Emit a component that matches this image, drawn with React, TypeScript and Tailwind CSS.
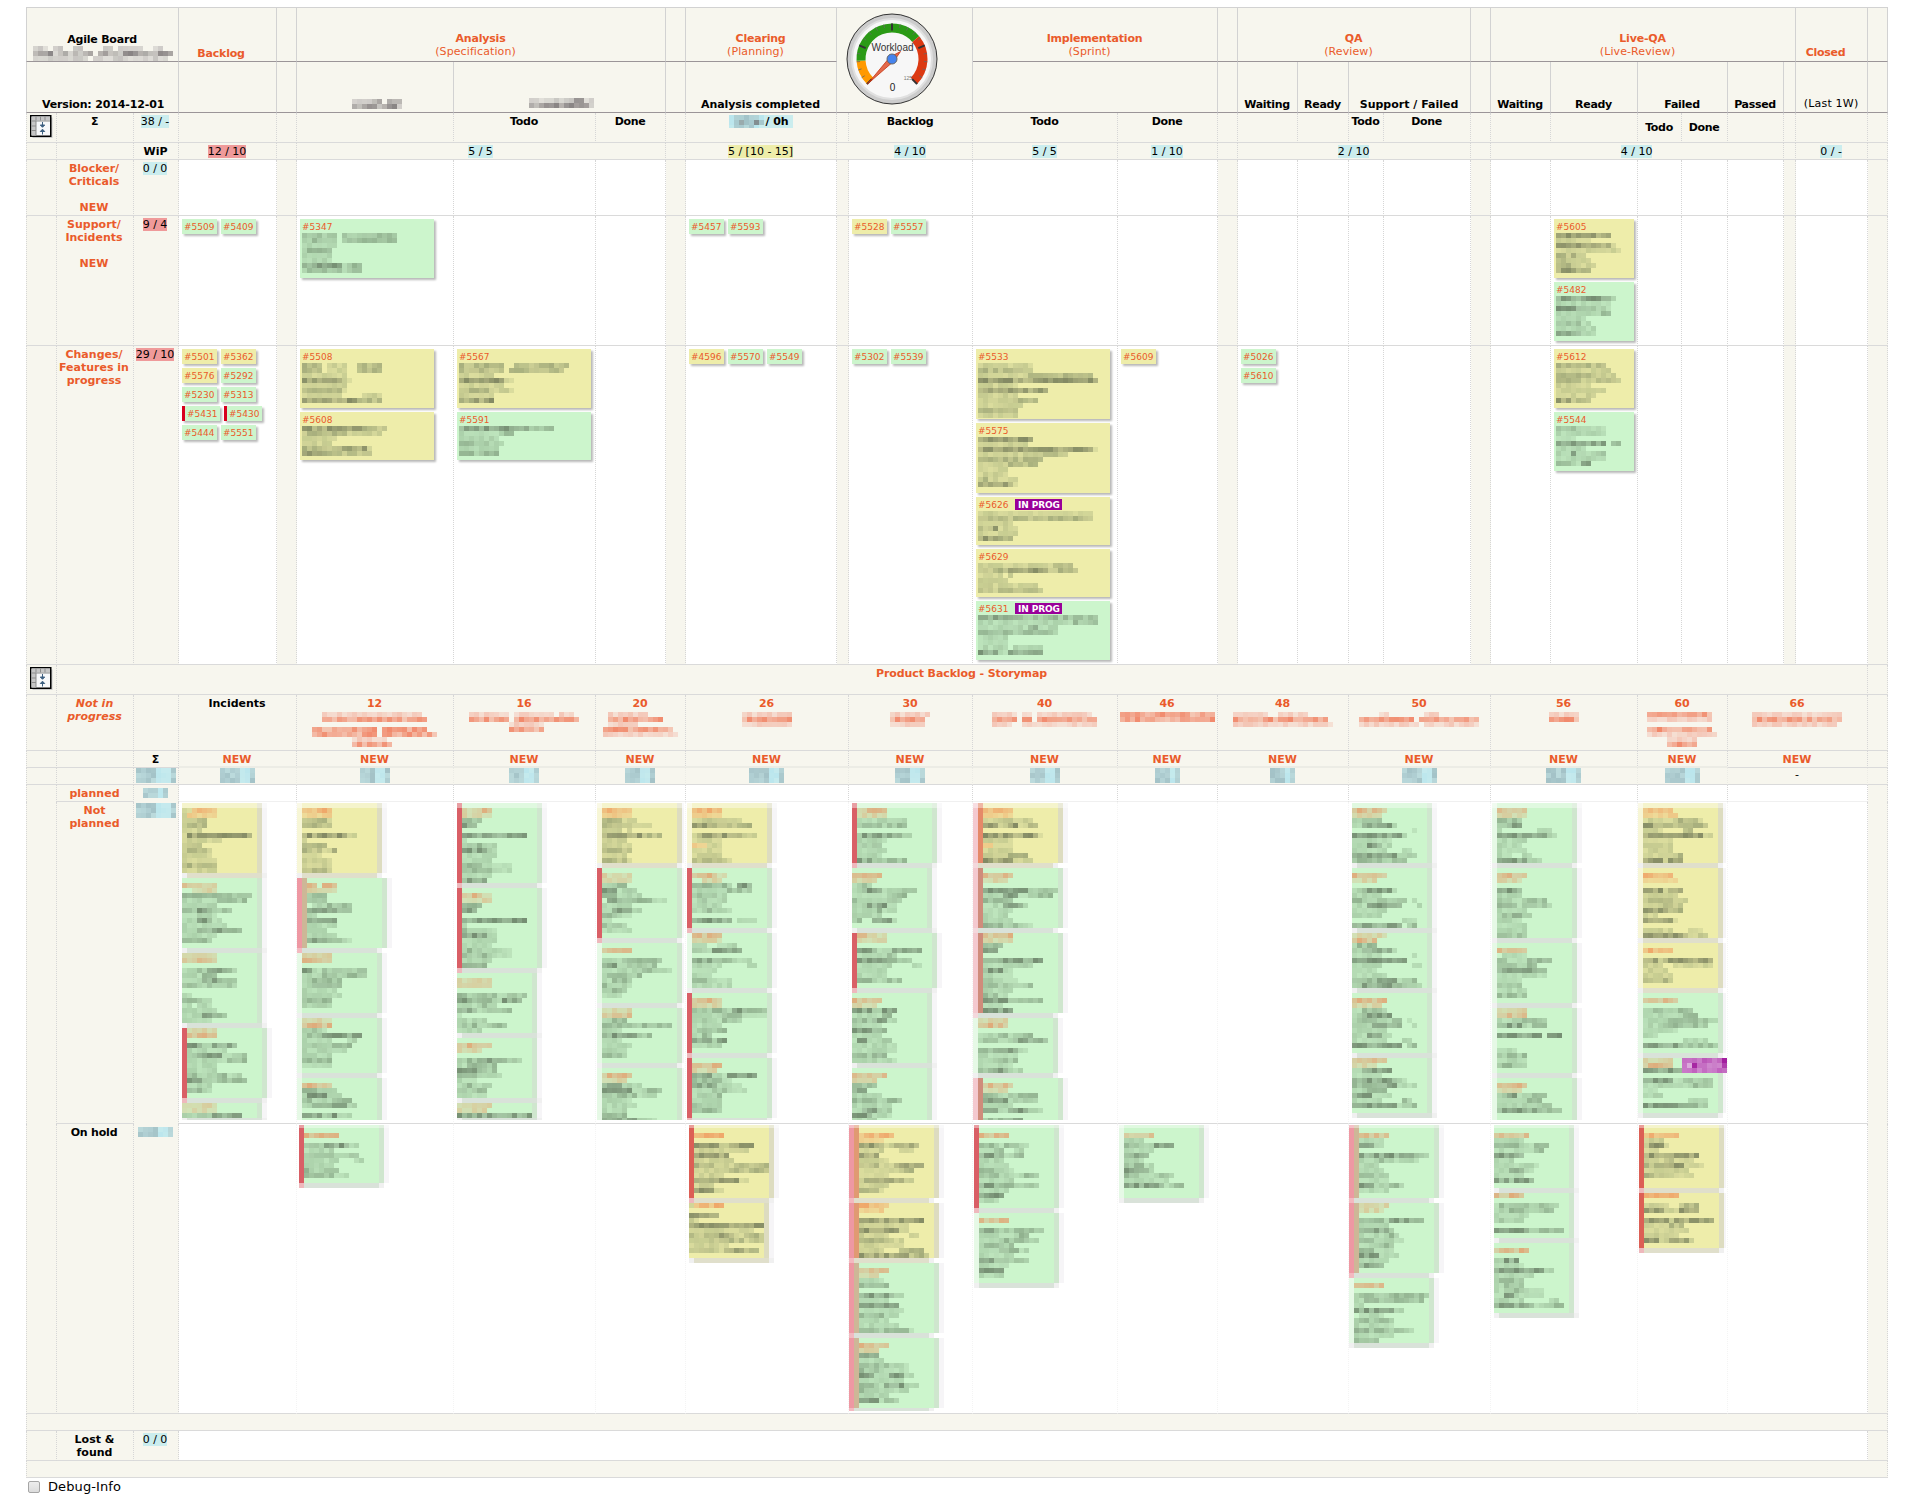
import React from "react";

type Kids = { children?: React.ReactNode };

/* ---------- pixelated (redacted) text ---------- */

const TONES: Record<string, [string, number]> = {
  D: ["55,68,50", 0.42],
  d: ["65,85,60", 0.3],
  l: ["70,95,65", 0.18],
  O: ["240,105,50", 0.38],
  o: ["240,120,60", 0.24],
  R: ["238,90,50", 0.5],
  r: ["238,100,70", 0.24],
  G: ["75,68,72", 0.46],
  g: ["110,105,110", 0.26],
  B: ["75,105,120", 0.24],
  b: ["150,215,235", 0.25],
  P: ["150,0,145", 0.6],
  p: ["165,30,160", 0.4],
};

function noise(a: number, b: number, c: number) {
  const v = Math.sin(a * 12.9898 + b * 78.233 + c * 37.719) * 43758.5453;
  return v - Math.floor(v);
}

/* Each row is a run-length string: a tone letter and a number of 5px blocks; "_" leaves a gap. */
function Mosaic({ rows, seed = 1 }: { rows: string; seed?: number }) {
  return (
    <div>
      {rows.split(" ").map((row, y) => {
        const cells: React.ReactNode[] = [];
        for (const m of row.matchAll(/([_a-zA-Z])(\d+)/g)) {
          for (let i = 0; i < Number(m[2]); i++) {
            const tone = TONES[m[1]];
            const k = cells.length;
            const f = 0.6 + noise(k, y, seed + row.length) * 0.8;
            cells.push(
              <span
                key={k}
                className="block h-[5px] w-[5px] shrink-0"
                style={tone ? { backgroundColor: `rgba(${tone[0]},${Math.min(1, tone[1] * f).toFixed(2)})` } : undefined}
              />
            );
          }
        }
        return (
          <div key={y} className="flex h-[5px]">
            {cells}
          </div>
        );
      })}
    </div>
  );
}

/* ---------- table parts ---------- */

type CellProps = Kids & {
  s?: number;
  rs?: number;
  solid?: boolean;
  dark?: boolean;
  white?: boolean;
  noR?: boolean;
  noB?: boolean;
  first?: boolean;
  cls?: string;
};

function C({ children, s = 1, rs = 1, solid, dark, white, noR, noB, first, cls = "" }: CellProps) {
  const parts = [
    "text-center",
    cls.includes("pr-") ? "" : "pr-px",
    white ? "bg-white" : "bg-[#f7f6ee]",
    noR ? "" : solid ? "border-r border-r-[#d2d2d2]" : "border-r border-r-[#d6d6d6] [border-right-style:dotted]",
    first ? (solid ? "border-l border-l-[#d2d2d2]" : "border-l border-l-[#d6d6d6] [border-left-style:dotted]") : "",
    noB ? "" : dark ? "border-b border-b-[#9b9598]" : "border-b border-b-[#dadada]",
    cls.includes("align-") ? "" : "align-top",
    cls,
  ];
  return (
    <td colSpan={s} rowSpan={rs} className={parts.join(" ")}>
      {children}
    </td>
  );
}

const Blue = ({ children }: Kids) => <span className="inline-block h-[13px] bg-[#cbedee]">{children}</span>;
const Red = ({ children }: Kids) => <span className="inline-block h-[13px] bg-[#ef9a9a]">{children}</span>;
const Yel = ({ children }: Kids) => <span className="inline-block h-[13px] bg-[#eeedaa]">{children}</span>;
const Org = ({ children }: Kids) => <span className="text-[#ea5b2b]">{children}</span>;

function Phase({ title, sub }: { title: string; sub: string }) {
  return (
    <div className="text-[#ea5b2b]">
      <b className="block tracking-[-0.2px]">{title}</b>
      <span className="block pr-[10px] tracking-[0.1px]">{sub}</span>
    </div>
  );
}

function BlueMosaic({ n, rows = 3, seed = 1 }: { n: number; rows?: number; seed?: number }) {
  const a = Math.ceil(n / 2);
  const row = `B${a}b${n - a - 1}B1`;
  return (
    <div className="flex justify-center">
      <div className="bg-[#cfeeee]">
        <Mosaic seed={seed} rows={Array(rows).fill(row).join(" ")} />
      </div>
    </div>
  );
}

function ToggleIcon() {
  return (
    <svg width="24" height="24" viewBox="0 0 24 24" className="ml-[3px] mt-[2px] block">
      <rect x="2.5" y="2.5" width="20" height="20.5" fill="#c9c9c9" />
      <rect x="0.75" y="0.75" width="20" height="20.5" fill="#f7f8fa" stroke="#000" strokeWidth="1.5" />
      <path d="M1.5 1.5H20V5.5H6V20.5H1.5Z" fill="#c6c6c6" />
      <path d="M6 1.5V5.5M10.5 1.5V5.5M15 1.5V5.5M1.5 6H20M6 6V20.5M1.5 11H6M1.5 15.5H6" stroke="#8d8d8d" strokeWidth="1" fill="none" />
      <path d="M12.5 7V11.5M10.3 10L12.5 12.3L14.7 10ZM12.5 19.5V15M10.3 16.5L12.5 14.2L14.7 16.5Z" stroke="#3c5f80" strokeWidth="1" fill="#3c5f80" />
    </svg>
  );
}

function polar(r: number, deg: number) {
  const t = (deg * Math.PI) / 180;
  return `${(46 + r * Math.cos(t)).toFixed(2)} ${(46 + r * Math.sin(t)).toFixed(2)}`;
}
function band(from: number, to: number) {
  const large = to - from > 180 ? 1 : 0;
  return `M${polar(35.5, from)}A35.5 35.5 0 ${large} 1 ${polar(35.5, to)}L${polar(26.5, to)}A26.5 26.5 0 ${large} 0 ${polar(26.5, from)}Z`;
}

function Gauge() {
  const ticks = Array.from({ length: 21 }, (_, i) => i);
  return (
    <svg width="92" height="92" viewBox="0 0 92 92" className="ml-[9px] mt-[5px] block">
      <circle cx="46" cy="46" r="45" fill="#cccccc" stroke="#333" strokeWidth="1" />
      <circle cx="46" cy="46" r="40" fill="#f7f7f7" stroke="#e0e0e0" strokeWidth="2" />
      <path d={band(135, 177)} fill="#ff9900" />
      <path d={band(177, 320)} fill="#2a9a16" />
      <path d={band(320, 405)} fill="#dc3912" />
      {ticks.map((i) => {
        const a = 135 + i * 13.5;
        const major = i % 5 === 0;
        return (
          <path
            key={i}
            d={`M${polar(major ? 28.5 : 32, a)}L${polar(35.5, a)}`}
            stroke={major ? "#333" : "#666"}
            strokeWidth={major ? 2 : 0.8}
          />
        );
      })}
      <text x="46.5" y="37.5" textAnchor="middle" className="fill-[#333] font-['Liberation_Sans'] text-[10px]">
        Workload
      </text>
      <text x="66" y="67" textAnchor="end" className="fill-[#777] font-['Liberation_Sans'] text-[5px]">
        125
      </text>
      <text x="46.5" y="78" textAnchor="middle" className="fill-[#222] font-['Liberation_Sans'] text-[10px]">
        0
      </text>
      <path d="M21.5 71L44 44L54.5 38.5L48 48Z" fill="#dc3912" fillOpacity="0.75" stroke="#c63310" strokeWidth="0.8" />
      <circle cx="46" cy="46" r="5" fill="#4684ee" stroke="#666" strokeWidth="1" />
    </svg>
  );
}

/* ---------- tickets ---------- */

const SHADOW = "shadow-[2px_2px_2px_rgba(0,0,0,0.28)]";

function Chip({ id, y, bar }: { id: string; y?: boolean; bar?: boolean }) {
  return (
    <div
      className={`h-[15px] shrink-0 px-[2px] pt-[3px] text-[9px] leading-[11px] text-[#ea5b2b] ${SHADOW} ${
        bar ? "w-[38px] border-l-[3px] border-l-[#d8001e]" : "w-[35px]"
      } ${y ? "bg-[#eeedaa]" : "bg-[#ccf5cc]"}`}
    >
      #{id}
    </div>
  );
}

function Chips({ items, cls = "" }: { items: string[]; cls?: string }) {
  return (
    <div className={`flex flex-wrap gap-x-[4px] gap-y-[4px] pl-[3px] pt-[3px] text-left ${cls}`}>
      {items.map((t) => (
        <Chip key={t} id={t.replace(/\D/g, "")} y={t.includes("y")} bar={t.includes("b")} />
      ))}
    </div>
  );
}

type TicketT = { id: string; h: string; y?: boolean; prog?: boolean; m: string; w?: string };
function Ticket({ id, h, y, prog, m, w = "w-[134px]" }: TicketT) {
  return (
    <div className={`px-[2px] pt-[2px] text-left ${SHADOW} ${h} ${w} ${y ? "bg-[#eeedaa]" : "bg-[#ccf5cc]"}`}>
      <div className="flex h-[12px] gap-[7px] text-[9px] leading-[13px] text-[#ea5b2b]">
        #{id}
        {prog && <span className="h-[11px] w-[47px] bg-[#990099] text-center font-bold leading-[12px] tracking-[-0.1px] text-white">IN PROG</span>}
      </div>
      <Mosaic rows={m} seed={Number(id) % 97} />
    </div>
  );
}
const Tickets = ({ list }: { list: TicketT[] }) => (
  <div className="flex flex-col gap-[4px] pl-[3px] pt-[3px]">
    {list.map((t) => (
      <Ticket key={t.id} {...t} />
    ))}
  </div>
);

/* ---------- storymap cards ---------- */

/* offset | bar: "-", r, p, x | color: g, y | height in blocks | block rows */
type Story = [number, string, string, number, string];

function StoryCard({ card, first, seed }: { card: Story; first: boolean; seed: number }) {
  const [off, bar, color, n, m] = card;
  const bg = color === "y" ? "bg-[#eeedaa]" : "bg-[#ccf5cc]";
  const edge = off >= 4 && bar === "-";
  const bars =
    bar === "r" ? (
      <div className={`w-[5px] shrink-0 ${color === "y" ? "bg-[#dc5f55]" : "bg-[#d95f66]"}`} />
    ) : bar === "p" ? (
      <>
        <div className="w-[5px] shrink-0 bg-[#ee98a3]" />
        <div className={`w-[5px] shrink-0 ${color === "y" ? "bg-[#e09a72]" : "bg-[#cdb797]"}`} />
      </>
    ) : bar === "x" ? (
      <>
        <div className="w-[5px] shrink-0 bg-[#f4c9cf]" />
        <div className={`w-[5px] shrink-0 ${color === "y" ? "bg-[#e58968]" : "bg-[#cf8c7b]"}`} />
      </>
    ) : edge ? (
      <div className={`w-[5px] shrink-0 ${color === "y" ? "bg-[#f7f6d6]" : "bg-[#e6f9e6]"}`} />
    ) : null;
  const lead =
    bar === "r" ? "bg-[#eeb8bc]" : bar === "p" ? "bg-[#f3b9c0]" : bar === "x" ? "bg-[#f4d8dc]" : "bg-[#f0f0f0]";
  return (
    <div className="relative overflow-hidden" style={{ height: n * 5, marginLeft: edge ? Math.max(0, off - 5) : off }}>
      <div className="flex" style={{ height: n * 5 - 5 }}>
        {bars}
        <div className={`w-[75px] shrink-0 ${bg}`}>
          <Mosaic rows={m} seed={seed} />
        </div>
        <div className={`w-[5px] shrink-0 ${color === "y" ? "bg-[#dddcc0]" : "bg-[#cfe6ce]"}`} />
        <div className="w-[5px] shrink-0 bg-[#f6f5f7]" />
      </div>
      <div className="flex h-[5px]">
        <div className={`w-[5px] ${lead}`} />
        <div className={`w-[75px] ${color === "y" ? "bg-[#e0dfcb]" : "bg-[#d9e2d9]"}`} />
        <div className="w-[5px] bg-[#f0f0f0]" />
      </div>
      {first && <div className="absolute inset-x-0 top-0 h-[5px] bg-white/40" />}
    </div>
  );
}

function Stories({ list, seed, tall }: { list: Story[]; seed: number; tall?: boolean }) {
  return (
    <div className={`mt-[1px] overflow-hidden ${tall ? "h-[317px]" : "h-[286px]"}`}>
      <div className={tall ? "" : "-mt-[2px]"}>
        {list.map((c, i) => (
          <StoryCard key={i} card={c} first={i === 0} seed={seed * 7 + i} />
        ))}
      </div>
    </div>
  );
}

const NOT_PLANNED: Record<string, Story[]> = {
  inc: [
    [3, "-", "y", 15, "_1 l2O5 l1o6 l2d3 l1d4 l4 l1D13 l8 l1d3 l1d4l1 l6 l7 d7 l7 d7"],
    [3, "-", "g", 15, "_1 O2o5 _2o5 d7d7 l7d6 l7 d3D2d5 l7 l3D3l2 l9 l3D6d3 l7 d6"],
    [3, "-", "g", 15, "o7 O7 _1 l3d2D4d2 l4d3 l4D3d4 d3l2d5l1 _1 l2 d4l2 l2_1l3 l7 l4D3d2 l6"],
    [3, "r", "g", 15, "o6 O6 _1 D3l2D5 l8 d2D5l2d3 l8d4 l6 l6 d2l4d2l3 D3d9 l5 D3l2"],
    [3, "-", "g", 4, "o7 o7 l3d3D6"],
  ],
  a12: [
    [5, "-", "y", 15, "_1 O6 o6 d5l1 d6 _1 D9l2 l1 d5 d4l2D1 l4 l6 l6 d6 l6"],
    [0, "p", "g", 15, "_1 O2_1O3 o6 d4 d4 _1l3d5 D9 l2 D6 l6 l4 l6 D4d4l1"],
    [5, "-", "g", 13, "o6 O6 _1 D2l2d9 l4d3l2d4 l2d4d2 l2D6 l7 d5l3 d6 l6"],
    [5, "-", "g", 12, "o6 O6 l1d2l2 l1d3D8 l6_3l2 d3l2d5 l6l3 l6 d6 l6"],
    [5, "-", "g", 10, "_1 O6 d5l2 l1D4l3 d2l4d4 l2d4D3l2 _1 D4l1D2l3"],
  ],
  a16: [
    [3, "r", "g", 17, "_1 o4O2 o6 d4 D3 _1 D13 l1 d4l3 D5l2 l7 l6 d4l6 d6l4 l6 D5"],
    [3, "r", "g", 17, "_1 O4o2 o6 d4 D3 _1 D13 l1 d4l3 D5l2 l7 l6 d4l6 d6l4 l6 D5"],
    [3, "-", "g", 13, "_1 o7 o7 _1 d2l1d5l2d4 D2d5l2D4 l5d3 D4l1d6 l1 l6 d4l3d3 l5"],
    [3, "-", "g", 13, "_1 O7 o5 _1 d5D5d3 l2d6 D4d4 d5l4 l4 l1d2l2d2 d2l1d3 l6"],
    [3, "-", "g", 4, "o7 o6 D15"],
  ],
  a20: [
    [6, "-", "y", 13, "_1 O6 o6 d4l3 d6l4 l4_1d1 D8d4 l5 l6 d6 l5 d5l1"],
    [1, "r", "g", 15, "_1 O1o5 o6 l3d2 D3l2d2 d3l5 _1D3d6l3 l6 l2D4l2 d3l3 l2 d4l1 l6"],
    [6, "-", "g", 13, "_1 O6 _1 l4d8 D3l2d6 l7d3l4 d8 l2d4 d2l4 d5 l4"],
    [6, "-", "g", 12, "o6 O6 l2d3 d7l1d6 l4 D7d3 l4 l6 l5 d5"],
    [6, "-", "g", 12, "_1 O6 o5 D4l4 D6l2d4 d7l4 l6 l7 l5 d5 D7l4"],
  ],
  a26: [
    [6, "-", "y", 13, "_1 O6 o6 l3d4l3 D4d8 _1 l1D9l3 l6 o3l3 l6 l6 d6l2"],
    [1, "r", "g", 13, "_1 O5o2 _2o4 d8_1D3 l7d5 l1d4l2 l2D1l4 l6 l3D1l4 _1 d1D7_1l4"],
    [6, "-", "g", 12, "O6 o6 l3_2l4 d3l1D6 _1 D4d5l3 l6_5l2 l5 l4 d4l4 l8"],
    [1, "r", "g", 13, "_1 O6 o6 d7l1D3d4 l6d4l6 d3l3d4 l6 l1d3l1d2 l2d2 D4l1D2 l6"],
    [1, "r", "g", 13, "_1 O6 o5 D4l3D6 d6l2 D5l5 l4d3l4 l1d2l1d2 l6 d4l2 d6"],
  ],
  a30: [
    [3, "r", "g", 13, "_1 o2O4 o6 l6l4 d5l1d4 _1 l1D8l2 l6 d5 l6 l5 D3l1d6"],
    [3, "-", "g", 13, "_1 O6 o5 l2d2 l2D4l3d4 l7d4 d3l4d3 l3D4l2 l5d1l3 l6 d2_2D4l1"],
    [3, "r", "g", 12, "O2o4 o4O2 _1 D4l3D6 l6d2 D6d5 l7_4l2 l6 l6 d4l2d3"],
    [3, "-", "g", 15, "_1 O6 o5 D4l2D3 l6d2 d4D3l2 l6 D5d2 l6 l1D2l3d2 l9 l9 d4D3 l9"],
    [3, "-", "g", 12, "_1 O7 o5 d5 D3 l6 d5l1d4 l8 l2D3d3 D4l4 l5"],
  ],
  a40: [
    [0, "x", "y", 13, "_1 O6 o6 l3d3l4 D3l2D2l2D2 _1 D11l1 l6 o2l4 l6 l5d4 D6l4"],
    [0, "x", "g", 13, "_1 O6 o5 _1 D9d6 l4D3l4d3 d6 l4D4l1 l6 l5 l6 D3d4l3"],
    [0, "x", "g", 17, "O6 o6 d4 D3 _1 d4D8 l6d4 D4l2 l6 d3l4 d6l2d2 l6 d3l2 D5d7 l4 D6 l4"],
    [5, "-", "g", 12, "o6 O6 _1 l4d2l2d3 d4l3D7 _1 d3D5l2 l8 l4d4 l7 d2D4l3"],
    [0, "x", "g", 10, "_1 O6 o5 d3l2d6 D5l2d4 l6 D3l2D4l3 _1 d4D4"],
  ],
  a50: [
    [3, "-", "g", 13, "_1 O6o1 o6 l2d4 l2D6l1 _12l1 D10l1 l8 l3D3l2 l7_3l2 D9l2d2 d6l2d3"],
    [3, "-", "g", 13, "_1 O7 o5 _1 l2D6l1 l6 d2l3d6_1l1 l3D7_3l1 l7 l6 _10l3 D10_1d2"],
    [3, "-", "g", 12, "o7 O5 l1d4 l2D6l1 l6_6l1 D11 l6_6l2 l5 l7 d5D4l2d2 l2D6d4l2"],
    [3, "-", "g", 13, "_1 O7 o6 l2d5 l2D6 d5l3d2_1l1 l4D6_2l1 l7 l3D3l2 l7_3l2 D10_1d2"],
    [3, "-", "g", 12, "O7 o5 l2D6 l6 D9l2 d5D4l4 l3d4 D4l4 l6_4d2 D9l2d2"],
  ],
  a56: [
    [6, "-", "g", 13, "_1 O6 o6 d5 l2D3 d1_7l3 D10l2 l6 l5 l6 l3_2l2 D6l3"],
    [6, "-", "g", 15, "_1 O6 o5 _1 D5 l5 d3l3d4 D4l1d5l1 l6 d2l1D2l2 l5 l6 l6 d6"],
    [6, "-", "g", 13, "_1 O6 _1l5 d2l4D5 d4l2d2 D8d2 l4l6 l5 d5 l6 d6"],
    [6, "-", "g", 14, "o6 O6 l5d5 d2D3l2d3 _1 D9_1D3 _1 _1 l4 d6 l6 d6"],
    [6, "-", "g", 10, "_1 O6 o5 d2D2l2d4 l6d3 l9d2 D9d4"],
  ],
  a60: [
    [4, "-", "y", 13, "_1 O6 o7 l6d5l1 D3d10 l4_4d2 D12l2 l6 l6 l6 l6d2 D4l1D3"],
    [4, "-", "y", 15, "_1 O6 o7 _1 D4l1D3 l7 d6l3 l4d4 D5d3 l3 D6l1 _1 l6_3l3 D9l2d2"],
    [4, "-", "y", 10, "_1 O6 _1 D3l1D10 l4_2l8 l5 l6 d3l1d2"],
    [4, "-", "g", 13, "_1 O7 _1 d5l2d3 l8d3 l5d9l1 l4d9 l7 l3 _8l5 D8d6l1"],
    [4, "-", "g", 12, "o6 O6 D9 _1 D6l2d6 l9d5 l3 l4 _9l4 D8d5"],
  ],
};

const ON_HOLD: Record<string, Story[]> = {
  a12: [[2, "r", "g", 13, "_1 _1 O7 _1 d4D5l2 l6 d6l2d3 l7_3l2 l6 d2l2d3 d6l3"]],
  a26: [
    [3, "r", "y", 16, "_1 _1 O6 _1 D5l2D5 l11 D7 l8 d4l4d7 l7d8 l6 d4D5l2 l4 D4l2"],
    [3, "-", "y", 12, "l1O6 _1 D6 l2 D15 l13 d6D3l2d4 l4d7l2d2 l8 d5l2D4d3"],
  ],
  a30: [
    [0, "p", "y", 16, "_1 _1 O7 o5 D5l2D5 l5_3l3 D4 l6 d4l3D6 l8d3 l6 d2D7l2 l6 d4l1"],
    [0, "p", "y", 12, "O6 o5 _1 D13 l10 D8l2 l6_4l2 d6l3 l9 l5_3d5 D10l1d3"],
    [0, "p", "g", 15, "_1 O6 o4 l5 d6 _1 D7l2 l6 D8 l9 d5l3 l6 l8 D4d6l1"],
    [0, "p", "g", 15, "_1 O6 o4 D4 l5 d6l4 d4l6 D3l3D3l2 l9 d4l1D4l3 d3l7 l6 D4l1d3"],
  ],
  a40: [
    [1, "r", "g", 18, "_1 _1 O6 _1 d3l2d3l2 l3d2_2l2 D5l2D2 l5 l6 d5l2 d4l5d3 l7 D3d9 l6 D5 l4"],
    [6, "-", "g", 15, "_1 O6 _1 D3d10 l7d3 l5d5l2 d7 l4d4l2 l7 D3d6l1 l6 D5 l5"],
  ],
  a46: [[6, "-", "g", 16, "_1 _1 O1o1O4 l4 d4l2D4 l6 D5 l4 d4l2 D5l1 d3l4d3 l9 D8l1d3 _1"]],
  a50: [
    [0, "p", "g", 16, "_1 _1 O6 l5 D3l2 _1 D11d3 l4d2l6 l4 l5 d5l1 l6 D3l2d4 l6"],
    [0, "p", "g", 15, "o6 o5 _1 d5l1D5d2 l6 D6l1 l6d2 d3l6 l4d3 d3l4 D4l4 l6 D5"],
    [5, "-", "g", 14, "_1 O6 _1 d6d9 l2D3l1d8 l2 D8l2 _1l5 d7l1 l8 D3d7l2 l8 d5"],
  ],
  a56: [
    [3, "-", "g", 14, "_1 _1 O7 l6 d6l2d3 l8d2 D6 l4 l7l2 l3D3l2 l6 D3l1D4"],
    [3, "-", "g", 10, "O6 _1 l1d6l2d4 l3d3l2d4 l7 d2l4 _1 D7l2d5"],
    [3, "-", "g", 15, "_1 O7 _1 l2D3 l6 D10l2 l8 d6 l2d4 l4d3l3 l2D2l6 l6_5l2 D8l2d4"],
  ],
  a60: [
    [1, "r", "y", 14, "_1 _1 O7 l4 l1D3l1 l3 D11 l4d2l4 d4D4l4 l9 d4l6"],
    [1, "r", "y", 12, "O7 _1 l5_2d4 D4l3D4 _1 D5l1D8 l5d3 l9 l7 D3l2D4l1"],
  ],
};

const COLS = [31, 77, 45, 98, 20, 157, 142, 70, 20, 151, 12, 124, 145, 100, 20, 60, 51, 35, 87, 20, 60, 87, 44, 46, 56, 12, 72, 20];

/* Storymap columns: key, column span, label, redacted title rows, sum width */
const MAP: [string, number, string, string, number][] = [
  ["inc", 2, "Incidents", "", 7],
  ["a12", 1, "12", "_2r20 _2R21 _1 R13_1R9 R13_1R11 _8r7 _8R8", 6],
  ["a16", 1, "16", "r8_1r8_1r3 R8_1R13 _8r7 _8R7", 6],
  ["a20", 2, "20", "_1r8 _1R11 _1r6 R14 r15", 6],
  ["a26", 2, "26", "r10 R10 r10", 7],
  ["a30", 1, "30", "r8 R7 r7", 6],
  ["a40", 1, "40", "r5_1r2_1r11 R5_1R2_1R12 r4_2r15", 6],
  ["a46", 1, "46", "R19 R19", 5],
  ["a48", 3, "48", "r7_2r6 R19 r20", 5],
  ["a50", 3, "50", "_4r2_7r3 R11_1R12 r12_1r11", 7],
  ["a56", 2, "56", "r6 R6", 7],
  ["a60", 2, "60", "R13 r13 _1 R13 r14 _4r6 _4R6", 7],
  ["a66", 3, "66", "r18 R18 r17", 0],
];

/* body column kinds for the swimlane rows */
const GUTTERS = new Set([4, 8, 10, 14, 19, 25, 27]);

function Lane({ h, label, wip, content }: { h: string; label: React.ReactNode; wip: React.ReactNode; content: Record<number, React.ReactNode> }) {
  return (
    <tr className={h}>
      <C first />
      <C cls="pt-[2px] pr-[2px] font-bold">
        <Org>{label}</Org>
      </C>
      <C cls="pt-[2px] pr-[2px]">{wip}</C>
      {COLS.slice(3).map((_, k) => {
        const i = k + 3;
        return (
          <C key={i} white={!GUTTERS.has(i)}>
            {content[i]}
          </C>
        );
      })}
    </tr>
  );
}

const BOTTOM = "align-bottom font-bold pb-[1px]";

export default function App() {
  return (
    <div className="h-[1511px] w-[1920px] overflow-hidden bg-white pl-[26px] pt-[7px] font-['DejaVu_Sans',sans-serif] text-[11px] leading-[13px] text-black">
      <table className="w-[1862px] table-fixed border-separate border-spacing-0">
        <colgroup>
          {COLS.map((w, i) => (
            <col key={i} style={{ width: w }} />
          ))}
        </colgroup>
        <tbody>
          <tr className="h-[55px] [&>td]:border-t [&>td]:border-t-[#d2d2d2]">
            <C first solid dark s={3} cls="align-bottom">
              <b className="tracking-[-0.2px]">Agile Board</b>
              <div className="ml-[6px]">
                <Mosaic rows="g3_1g2_2g2_4g2_1g5_2g2 G4g1G2g1G1g1G2_1G4g1G3G2G3G2 g11_1g15" seed={5} />
              </div>
            </C>
            <C solid dark cls="align-bottom pb-[1px] pr-[13px]">
              <b className="tracking-[-0.2px] text-[#ea5b2b]">Backlog</b>
            </C>
            <C solid dark />
            <C solid dark s={3} cls="align-bottom pb-[3px]"><Phase title="Analysis" sub="(Specification)" /></C>
            <C solid dark />
            <C solid dark cls="align-bottom pb-[3px]"><Phase title="Clearing" sub="(Planning)" /></C>
            <C solid dark s={2} rs={2}>
              <Gauge />
            </C>
            <C solid dark s={2} cls="align-bottom pb-[3px]"><Phase title="Implementation" sub="(Sprint)" /></C>
            <C solid dark />
            <C solid dark s={4} cls="align-bottom pb-[3px]"><Phase title="QA" sub="(Review)" /></C>
            <C solid dark />
            <C solid dark s={6} cls="align-bottom pb-[3px]"><Phase title="Live-QA" sub="(Live-Review)" /></C>
            <C solid dark cls="align-bottom pb-[2px] pr-[12px]">
              <b className="tracking-[-0.3px] text-[#ea5b2b]">Closed</b>
            </C>
            <C solid dark />
          </tr>

          <tr className="h-[51px] tracking-[-0.3px]">
            <C first solid dark s={3} cls="align-bottom font-bold pb-[1px] pl-[2px] tracking-[-0.15px]">Version: 2014-12-01</C>
            <C solid dark />
            <C solid dark />
            <C solid dark cls="align-bottom pb-[3px]">
              <div className="ml-[55px]"><Mosaic rows="g4G2_1G3 G5g1G3g1" seed={9} /></div>
            </C>
            <C solid dark s={2} cls="align-bottom pb-[4px]">
              <div className="ml-[75px]"><Mosaic rows="g9G2g2 G12g1" seed={12} /></div>
            </C>
            <C solid dark />
            <C solid dark cls="align-bottom font-bold pb-[1px] pr-[1px] tracking-[-0.1px]">Analysis completed</C>
            <C solid dark s={2} />
            <C solid dark />
            <C solid dark cls={BOTTOM}>Waiting</C>
            <C solid dark cls={BOTTOM}>Ready</C>
            <C solid dark s={2} cls={BOTTOM}><span className="tracking-normal">Support / Failed</span></C>
            <C solid dark />
            <C solid dark cls={BOTTOM}>Waiting</C>
            <C solid dark cls={BOTTOM}>Ready</C>
            <C solid dark s={2} cls={BOTTOM}>Failed</C>
            <C solid dark cls={BOTTOM}>Passed</C>
            <C solid dark />
            <C solid dark cls="align-bottom pb-[2px] tracking-[0.2px]">(Last 1W)</C>
            <C solid dark />
          </tr>

          <tr className="h-[30px] font-bold tracking-[-0.3px]">
            <C first><ToggleIcon /></C>
            <C cls="pt-[2px]">Σ</C>
            <C cls="pt-[2px] pr-[2px] font-normal tracking-normal"><Blue>38 / -</Blue></C>
            <C />
            <C />
            <C />
            <C cls="pt-[2px]">Todo</C>
            <C cls="pt-[2px]">Done</C>
            <C />
            <C cls="pt-[2px]">
              <div className="mx-auto flex h-[13px] w-[64px] bg-[#cbedee] tracking-[-0.1px]">
                <div className="w-[37px] shrink-0 overflow-hidden"><Mosaic rows="b1B5b1 b1B1G1B2G1B1 b1B4b1" seed={3} /></div>
                <span className="whitespace-nowrap">/ 0h</span>
              </div>
            </C>
            <C />
            <C cls="pt-[2px]">Backlog</C>
            <C cls="pt-[2px]">Todo</C>
            <C cls="pt-[2px]">Done</C>
            <C />
            <C />
            <C />
            <C cls="pt-[2px]">Todo</C>
            <C cls="pt-[2px]">Done</C>
            <C />
            <C />
            <C />
            <C cls="pt-[8px]">Todo</C>
            <C cls="pt-[8px]">Done</C>
            <C />
            <C />
            <C />
            <C />
          </tr>

          <tr className="h-[17px]">
            <C first />
            <C />
            <C cls="pt-[2px] font-bold">WiP</C>
            <C cls="pt-[2px]"><Red>12 / 10</Red></C>
            <C />
            <C s={3} cls="pt-[2px]"><Blue>5 / 5</Blue></C>
            <C />
            <C cls="pt-[2px]"><Yel>5 / [10 - 15]</Yel></C>
            <C noR />
            <C cls="pt-[2px]"><Blue>4 / 10</Blue></C>
            <C cls="pt-[2px]"><Blue>5 / 5</Blue></C>
            <C cls="pt-[2px]"><Blue>1 / 10</Blue></C>
            <C />
            <C s={4} cls="pt-[2px]"><Blue>2 / 10</Blue></C>
            <C />
            <C s={5} cls="pt-[2px]"><Blue>4 / 10</Blue></C>
            <C />
            <C cls="pt-[2px]"><Blue>0 / -</Blue></C>
            <C />
          </tr>

          <Lane h="h-[56px]" label={<>Blocker/<br />Criticals<br /><br />NEW</>} wip={<Blue>0 / 0</Blue>} content={{}} />

          <Lane
            h="h-[130px]"
            label={<>Support/<br />Incidents<br /><br />NEW</>}
            wip={<Red>9 / 4</Red>}
            content={{
              3: <Chips items={["5509", "5409"]} />,
              5: <Tickets list={[{ id: "5347", h: "h-[59px]", m: "d7_1d11 d7_1d11 l7 d6 l6 l6 D8l1d3 d8l1d3" }]} />,
              9: <Chips items={["5457", "5593"]} />,
              11: <Chips items={["5528y", "5557"]} />,
              21: (
                <Tickets
                  list={[
                    { id: "5605", w: "w-[80px]", y: true, h: "h-[59px]", m: "D11 l7 D11l1 l13 d3D1l2 d2l5 d4l4 D4d3" },
                    { id: "5482", w: "w-[80px]", h: "h-[59px]", m: "D11l1 l6l5 D5d3l3 l9d2 l6 d5l2 l8 D5l3" },
                  ]}
                />
              ),
            }}
          />

          <Lane
            h="h-[319px]"
            label={<>Changes/<br />Features in<br />progress</>}
            wip={<Red>29 / 10</Red>}
            content={{
              3: <Chips cls="w-[98px]" items={["5501y", "5362y", "5576y", "5292", "5230", "5313", "5431b", "5430b", "5444", "5551"]} />,
              5: (
                <Tickets
                  list={[
                    { id: "5508", y: true, h: "h-[59px]", m: "d4_1l4_2d5 d4_1l4_2d5 l9 D8l2 l9 d8l1 l8_4l4 D11d5" },
                    { id: "5608", y: true, h: "h-[48px]", m: "D12d5 d9l7 l7 l6 d7D6l1 D4d10" },
                  ]}
                />
              ),
              6: (
                <Tickets
                  list={[
                    { id: "5567", y: true, h: "h-[59px]", m: "d9_2d11 d9_1d11 l7 D9l2 l9 d6l5 l7 d3D4" },
                    { id: "5591", h: "h-[48px]", m: "D14d5 l9d2 l8 d6l3 l8 d8" },
                  ]}
                />
              ),
              9: <Chips items={["4596y", "5570", "5549"]} />,
              11: <Chips items={["5302", "5539"]} />,
              12: (
                <Tickets
                  list={[
                    { id: "5533", y: true, h: "h-[70px]", m: "l11 d11 l10d13 D24 l8 D14 l8 l7d5 l9 d8 l8" },
                    { id: "5575", y: true, h: "h-[70px]", m: "D11 l10 D23l1 l12d6 d13 l6d6 l6 l6 d2l6 D7l1" },
                    { id: "5626", y: true, prog: true, h: "h-[48px]", m: "l23 d23 l7 d3D1l4 l8 D4d3" },
                    { id: "5629", y: true, h: "h-[48px]", m: "l15d4 d6D8d6 l5_1l1 l6 l12 d3l1d9" },
                    { id: "5631", prog: true, h: "h-[59px]", m: "D8d16 l19d5 l10D2l4 d16 l6 l6 l6_1l6 D4l2D7" },
                  ]}
                />
              ),
              13: <Chips items={["5609y"]} />,
              15: <Chips items={["5026", "5610"]} />,
              21: (
                <Tickets
                  list={[
                    { id: "5612", w: "w-[80px]", y: true, h: "h-[59px]", m: "d10 l11 d7l5 d5l3d4l1 l7 l10 l8 D3d4" },
                    { id: "5544", w: "w-[80px]", h: "h-[59px]", m: "d5l5 l10 l4 D10_1d2 l6 l3D1l4d2 l10 d3l2D2" },
                  ]}
                />
              ),
            }}
          />

          <tr className="h-[30px]">
            <C first><ToggleIcon /></C>
            <C s={26} cls="pt-[2px] pr-[1px] font-bold tracking-[-0.1px]"><Org>Product Backlog - Storymap</Org></C>
            <C />
          </tr>

          <tr className="h-[56px] font-bold">
            <C first />
            <C cls="pt-[2px] italic"><Org>Not in<br />progress</Org></C>
            <C />
            {MAP.map(([k, s, label, m], i) => (
              <C key={k} s={s} cls="pt-[2px]">
                {k === "inc" ? <span>{label}</span> : <Org>{label}</Org>}
                {m && (
                  <div className="mt-[2px] flex justify-center">
                    <Mosaic rows={m} seed={20 + i} />
                  </div>
                )}
              </C>
            ))}
            <C />
          </tr>

          <tr className="h-[17px] font-bold">
            <C first />
            <C />
            <C cls="pt-[2px]">Σ</C>
            {MAP.map(([k, s]) => (
              <C key={k} s={s} cls={k === "a66" ? "pt-[2px]" : "border-b-[2px] border-b-[#ecece5] pt-[2px]"}>
                <Org>NEW</Org>
              </C>
            ))}
            <C />
          </tr>

          <tr className="h-[17px]">
            <C first />
            <C />
            <C><BlueMosaic n={8} seed={2} /></C>
            {MAP.map(([k, s, , , n], i) => (
              <C key={k} s={s} cls="border-r-[#ececE6]">
                {n ? <BlueMosaic n={n} seed={40 + i} /> : "-"}
              </C>
            ))}
            <C />
          </tr>

          <tr className="h-[17px]">
            <C first noB />
            <C cls="pt-[2px] font-bold"><Org>planned</Org></C>
            <C noB cls="pt-[3px]"><BlueMosaic n={5} rows={2} seed={14} /></C>
            {MAP.map(([k, s]) => (
              <C key={k} s={s} white cls="border-b-[#f0f0f0]" />
            ))}
            <C noB />
          </tr>

          <tr className="h-[322px]">
            <C first noB />
            <C cls="pt-[2px] font-bold"><Org>Not<br />planned</Org></C>
            <C noB cls="pt-[1px]"><BlueMosaic n={8} seed={2} /></C>
            {MAP.map(([k, s], i) => (
              <C key={k} s={s} white cls={k === "a66" ? "" : "border-r-[#f4f4f4]"}>
                {NOT_PLANNED[k] &&
                  (k === "a60" ? (
                    <div className="relative">
                      <Stories tall list={NOT_PLANNED[k]} seed={i} />
                      <div className="absolute left-[44px] top-[255px] bg-[#dca9dc]">
                        <Mosaic rows="p2P1p1P1p3P1 p1_1P1p5P1 p9" seed={6} />
                      </div>
                    </div>
                  ) : (
                    <Stories tall list={NOT_PLANNED[k]} seed={i} />
                  ))}
              </C>
            ))}
            <C noB />
          </tr>

          <tr className="h-[290px]">
            <C first />
            <C cls="pt-[2px] pr-[2px] font-bold tracking-[-0.2px]">On hold</C>
            <C cls="pt-[3px]"><BlueMosaic n={7} rows={2} seed={8} /></C>
            {MAP.map(([k, s], i) => (
              <C key={k} s={s} white cls={k === "a66" ? "" : "border-r-[#f4f4f4]"}>
                {ON_HOLD[k] && <Stories list={ON_HOLD[k]} seed={i + 30} />}
              </C>
            ))}
            <C />
          </tr>

          <tr className="h-[17px]">
            <C first s={28} />
          </tr>
          <tr className="h-[30px]">
            <C first />
            <C cls="pt-[2px] font-bold">Lost &amp;<br />found</C>
            <C cls="pt-[2px] pr-[2px]"><Blue>0 / 0</Blue></C>
            <C white s={24} />
            <C />
          </tr>
          <tr className="h-[17px]">
            <C first s={28} />
          </tr>
        </tbody>
      </table>
      <label className="mt-[2px] flex items-center gap-[8px] pl-[2px] text-[13px] leading-[13px] tracking-[0.1px]">
        <span className="h-[12px] w-[12px] rounded-[2px] border border-[#a5a5a5] bg-gradient-to-b from-[#ededed] to-[#dcdcdc]" />
        Debug-Info
      </label>
    </div>
  );
}
